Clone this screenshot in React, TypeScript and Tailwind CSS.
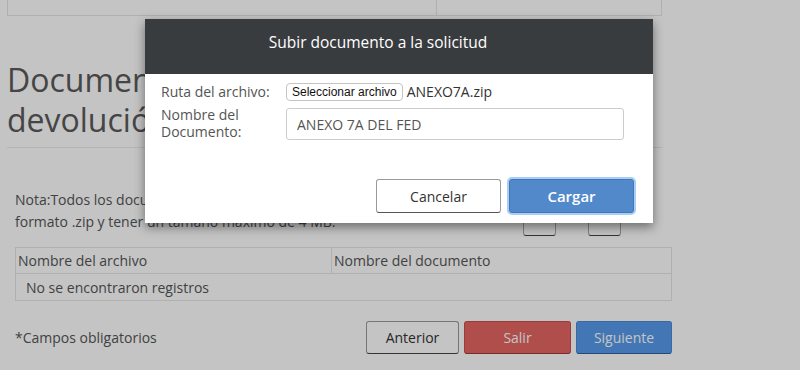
import { useState } from 'react'

const font = { fontFamily: '"Open Sans", "Liberation Sans", sans-serif' }

function UploadModal() {
  const [nombre, setNombre] = useState('ANEXO 7A DEL FED')
  return (
    <div className="absolute left-[145px] top-[19px] w-[508px] bg-white shadow-[0_4px_10px_rgba(0,0,0,0.45)]">
      <div className="flex h-[55px] items-start justify-center bg-[#393c3f] pr-[42px] pt-[12px] text-[15.5px] text-white">
        Subir documento a la solicitud
      </div>
      <div className="px-[16px] pt-[9px] text-[14px] text-[#555]">
        <div className="flex items-center">
          <span className="w-[125px] leading-[18px]">Ruta del archivo:</span>
          <button
            className="h-[18px] rounded-[4px] border border-[#c4c4c4] bg-white px-[5px] text-[12px] leading-[16px] text-[#111]"
            style={{ fontFamily: '"Liberation Sans", Arial, sans-serif' }}
          >
            Seleccionar archivo
          </button>
          <span className="ml-[4px] leading-[18px] text-[#333]">ANEXO7A.zip</span>
        </div>
        <div className="mt-[7px] flex items-center">
          <span className="-mt-[3px] w-[125px] pr-[14px] leading-[17px]">Nombre del Documento:</span>
          <input
            value={nombre}
            onChange={(e) => setNombre(e.target.value)}
            className="h-[32px] w-[338px] rounded-[3px] border border-[#ccc] px-[10px] text-[14px] text-[#555] outline-none"
          />
        </div>
        <div className="mt-[39px] flex justify-end gap-[8px] pb-[10px] pr-[3px]">
          <button className="h-[34px] w-[125px] rounded-[3px] border border-[#9a9a9a] border-b-[#555] bg-white text-[14px] text-[#333]">
            Cancelar
          </button>
          <button className="h-[34px] w-[125px] rounded-[3px] border border-[#3f79bb] bg-[#5189cb] text-[15px] font-semibold text-white ring-2 ring-[#a9cdf3]">
            Cargar
          </button>
        </div>
      </div>
    </div>
  )
}

export default function App() {
  return (
    <div className="relative h-[370px] w-[800px] overflow-hidden bg-white text-[#555]" style={font}>
      <div className="ml-[7px] w-[655px]">
        <div className="flex h-[16px] border-x border-b border-[#e6e6e6]">
          <div className="w-[429px] border-r border-[#e6e6e6]" />
        </div>
        <h1 className="mt-[44px] border-b border-[#ebebeb] pb-[7px] text-[32px] leading-[40px] text-[#5a5a5a]">
          Documentos de la solicitud de
          <br />
          devolución
        </h1>
      </div>

      <div className="ml-[15px] w-[657px]">
        <div className="mt-[41px] flex">
          <p className="w-[508px] text-[14px] leading-[22px]">
            Nota:Todos los documentos que adjunte deben estar en
            <br />
            formato .zip y tener un tamaño máximo de 4 MB.
          </p>
          <div className="flex gap-[32px] pt-[13px]">
            <button className="h-[34px] w-[33px] rounded-[3px] border border-[#aaa] border-b-[#444] bg-white" />
            <button className="h-[34px] w-[33px] rounded-[3px] border border-[#aaa] border-b-[#444] bg-white" />
          </div>
        </div>

        <table className="mt-[11px] w-full border-collapse border border-[#e6e6e6] text-[14px]">
          <thead>
            <tr className="h-[26px]">
              <th className="w-[316px] border border-[#e6e6e6] px-[2px] text-left font-normal">Nombre del archivo</th>
              <th className="border border-[#e6e6e6] px-[2px] text-left font-normal">Nombre del documento</th>
            </tr>
          </thead>
          <tbody>
            <tr className="h-[27px]">
              <td colSpan={2} className="border border-[#e6e6e6] px-[10px]">No se encontraron registros</td>
            </tr>
          </tbody>
        </table>

        <div className="mt-[20px] flex items-center justify-between">
          <span className="text-[14px]">*Campos obligatorios</span>
          <div className="flex gap-[5px]">
            <button className="h-[33px] w-[93px] rounded-[3px] border border-[#9a9a9a] border-b-[#444] bg-white text-[14px] text-[#333]">
              Anterior
            </button>
            <button className="h-[33px] w-[107px] rounded-[3px] border border-[#c9504c] border-b-[#a03a37] bg-[#e46662] text-[14px] text-white">
              Salir
            </button>
            <button className="h-[33px] w-[96px] rounded-[3px] border border-[#4c8ad6] border-b-[#2e5f9c] bg-[#589aea] text-[14px] text-white">
              Siguiente
            </button>
          </div>
        </div>
      </div>

      <div className="absolute inset-0 bg-black/[0.23]" />
      <UploadModal />
    </div>
  )
}
